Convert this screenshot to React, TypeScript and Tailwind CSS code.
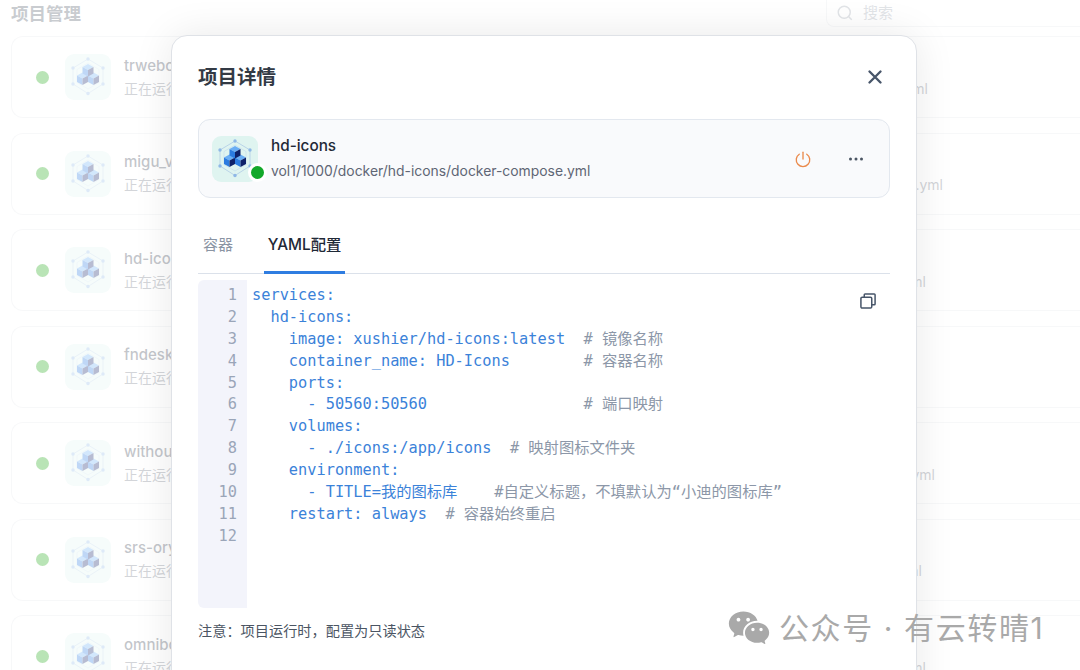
import { RiWechatFill } from "react-icons/ri";

const projects = [
  { name: "trwebocr", tail: "ml", tailW: "w-[804px]" },
  { name: "migu_video", tail: ".yml", tailW: "w-[819px]" },
  { name: "hd-icons", tail: "ml", tailW: "w-[802px]" },
  { name: "fndesk", tail: "", tailW: "w-[804px]" },
  { name: "without", tail: "yml", tailW: "w-[811px]" },
  { name: "srs-oryx", tail: "ml", tailW: "w-[798px]" },
  { name: "omnibox", tail: "ml", tailW: "w-[802px]" },
];

const yaml = [
  ["services:", ""],
  ["  hd-icons:", ""],
  ["    image: xushier/hd-icons:latest  ", "# 镜像名称"],
  ["    container_name: HD-Icons        ", "# 容器名称"],
  ["    ports:", ""],
  ["      - 50560:50560                 ", "# 端口映射"],
  ["    volumes:", ""],
  ["      - ./icons:/app/icons  ", "# 映射图标文件夹"],
  ["    environment:", ""],
  ["      - TITLE=我的图标库    ", "#自定义标题，不填默认为“小迪的图标库”"],
  ["    restart: always  ", "# 容器始终重启"],
  ["", ""],
];

function Cube({ x, y }: { x: number; y: number }) {
  return (
    <g transform={`translate(${x} ${y})`}>
      <path d="M0 0 L5.5 3 L0 6 L-5.5 3 Z" fill="#6aaef5" />
      <path d="M-5.5 3 L0 6 V12.5 L-5.5 9.5 Z" fill="#2b7be0" />
      <path d="M5.5 3 L0 6 V12.5 L5.5 9.5 Z" fill="#0e2169" />
    </g>
  );
}

function CubeIcon() {
  return (
    <div className="w-[46px] h-[46px] rounded-[9px] bg-[#dff4f0] shrink-0">
      <svg viewBox="0 0 46 46" className="w-[46px] h-[46px]">
        <path d="M23 5 L38 14 V30 L23 39.5 L8 30 V14 Z" fill="none" stroke="#a9c6e4" strokeWidth="0.7" />
        <path d="M23 9 L34 15.5 V28.5 L23 35 L12 28.5 V15.5 Z" fill="none" stroke="#bcd4ea" strokeWidth="0.5" />
        <circle cx="23" cy="5" r="1.7" fill="#8fb8e6" />
        <circle cx="38" cy="14" r="1.7" fill="#8fb8e6" />
        <circle cx="38" cy="30" r="1.7" fill="#8fb8e6" />
        <circle cx="23" cy="39.5" r="1.7" fill="#8fb8e6" />
        <circle cx="8" cy="30" r="1.7" fill="#8fb8e6" />
        <circle cx="8" cy="14" r="1.7" fill="#8fb8e6" />
        <Cube x={17.5} y={18.5} />
        <Cube x={28.5} y={18.5} />
        <Cube x={23} y={10} />
      </svg>
    </div>
  );
}

function ProjectRow({ name, tail, tailW }: { name: string; tail: string; tailW: string }) {
  return (
    <div className="h-[82px] shrink-0 rounded-xl border border-r-0 border-[#e5e7eb] bg-white flex items-center pl-[24px] -mr-[40px]">
      <span className="w-[13px] h-[13px] rounded-full bg-[#16a30a] shrink-0" />
      <div className="ml-[16px]">
        <CubeIcon />
      </div>
      <div className="ml-[13px]">
        <p className="text-[15px] leading-[22px] font-medium text-[#374151]">{name}</p>
        <div className="flex whitespace-nowrap text-[14px] leading-[22px] mt-[1px] text-[#6b7280]">
          <span className="w-[60px]">正在运行中</span>
          <span className={`${tailW} text-right -ml-[60px]`}>{tail}</span>
        </div>
      </div>
    </div>
  );
}

export default function App() {
  return (
    <div
      className="relative w-[1080px] h-[670px] overflow-hidden bg-white"
      style={{ fontFamily: "Inter, 'Noto Sans CJK SC', sans-serif" }}
    >
      {/* page behind the dialog */}
      <div className="px-[11px]">
        <div className="h-[27px] flex items-center justify-between">
          <h1 className="text-[17.5px] font-semibold text-[#4b5563] leading-[24px]">项目管理</h1>
          <div className="w-[284px] h-[27px] -mr-[41px] rounded-b-lg border border-t-0 border-r-0 border-[#e5e7eb] flex items-center pl-[9px] gap-[9px]">
            <svg viewBox="0 0 24 24" className="w-[18px] h-[18px]" fill="none" stroke="#9ca3af" strokeWidth="2">
              <circle cx="11" cy="11" r="8" />
              <path d="m17 17 4 4" />
            </svg>
            <span className="text-[15px] text-[#9ca3af]">搜索</span>
          </div>
        </div>
        <div className="flex flex-col gap-[14.5px] mt-[9px]">
          {projects.map((p) => (
            <ProjectRow key={p.name} {...p} />
          ))}
        </div>
      </div>

      {/* dim layer */}
      <div className="absolute inset-0 bg-white/70" />

      {/* dialog */}
      <div className="absolute left-[171px] top-[35px] w-[746px] h-[700px] rounded-2xl border border-[#dfe2e7] bg-white shadow-[0_0_40px_rgba(0,0,0,0.09)] px-[26px]">
        <div className="flex items-center justify-between h-[83px]">
          <h2 className="text-[19.5px] font-semibold text-[#333a45]">项目详情</h2>
          <svg viewBox="0 0 24 24" className="w-[22px] h-[22px] mr-[4px] mb-[1px]" fill="none" stroke="#475569" strokeWidth="2.6" strokeLinecap="round">
            <path d="M6 6 18 18M18 6 6 18" />
          </svg>
        </div>

        <div className="h-[79px] rounded-xl border border-[#e3e8ef] bg-[#f9fafc] flex items-center pl-[13px] pr-[25px]">
          <div className="relative">
            <CubeIcon />
            <span className="absolute -right-[9px] bottom-[0px] w-[19px] h-[19px] rounded-full bg-[#12a82a] border-[3px] border-white" />
          </div>
          <div className="ml-[13px] flex-1">
            <p className="text-[15.3px] leading-[22px] font-medium text-[#1f2937]">hd-icons</p>
            <p className="text-[13.9px] leading-[22px] mt-[3px] text-[#5f6675]">vol1/1000/docker/hd-icons/docker-compose.yml</p>
          </div>
          <svg viewBox="0 0 24 24" className="w-[18px] h-[18px]" fill="none" stroke="#ea8a4c" strokeWidth="1.8" strokeLinecap="round">
            <path d="M12 3v9" />
            <path d="M7 5.6a9 9 0 1 0 10 0" />
          </svg>
          <svg viewBox="0 0 16 16" className="w-[16px] h-[16px] ml-[36px]" fill="#4b5563">
            <circle cx="2.5" cy="8" r="1.5" />
            <circle cx="8" cy="8" r="1.5" />
            <circle cx="13.5" cy="8" r="1.5" />
          </svg>
        </div>

        <div className="flex h-[76px] border-b border-[#dbe1ea] items-end">
          <div className="w-[66px] h-full flex items-end pb-[17px] pl-[5px] text-[15px] text-[#8a94a3]">容器</div>
          <div className="w-[81px] h-[50px] border-b-[3px] border-[#2f7de1] -mb-[1px] flex items-center justify-center text-[15.3px] font-medium text-[#1f2937] pb-[5px]">
            YAML配置
          </div>
        </div>

        <div className="relative flex h-[328px] mt-[6px]" style={{ fontFamily: "'DejaVu Sans Mono', 'Noto Sans CJK SC', monospace" }}>
          <div className="w-[49px] rounded-l-md bg-[#f3f4fb] pt-[5px] pr-[10px] text-right text-[#9aa5b8] text-[15.3px] leading-[21.9px] shrink-0">
            {yaml.map((_, i) => (
              <div key={i} className="h-[21.9px]">{i + 1}</div>
            ))}
          </div>
          <div className="pl-[5px] pt-[5px] text-[15.3px] leading-[21.9px]">
            {yaml.map(([code, comment], i) => (
              <div key={i} className="h-[21.9px] whitespace-pre text-[#3b82d9]">
                {code}
                <span className="text-[#8c97a8]">{comment}</span>
              </div>
            ))}
          </div>
          <svg viewBox="0 0 24 24" className="absolute right-[12px] top-[11px] w-[20px] h-[20px]" fill="none" stroke="#475569" strokeWidth="1.8" strokeLinejoin="round">
            <rect x="3.5" y="7.5" width="13" height="13" rx="1.5" />
            <path d="M7.5 7.5V4.5a1 1 0 0 1 1-1h11a1 1 0 0 1 1 1v11a1 1 0 0 1-1 1h-3" />
          </svg>
        </div>

        <p className="mt-[13px] text-[14.2px] leading-[20px] text-[#4b5563]">注意：项目运行时，配置为只读状态</p>
      </div>

      {/* watermark */}
      <div className="absolute left-[727px] top-[606px] flex items-center text-[#a9a9a9]">
        <RiWechatFill className="w-[44px] h-[44px]" />
        <span className="ml-[8px] text-[30px] leading-[44px] tracking-[1.6px] whitespace-nowrap">公众号 · 有云转晴1</span>
      </div>
    </div>
  );
}
